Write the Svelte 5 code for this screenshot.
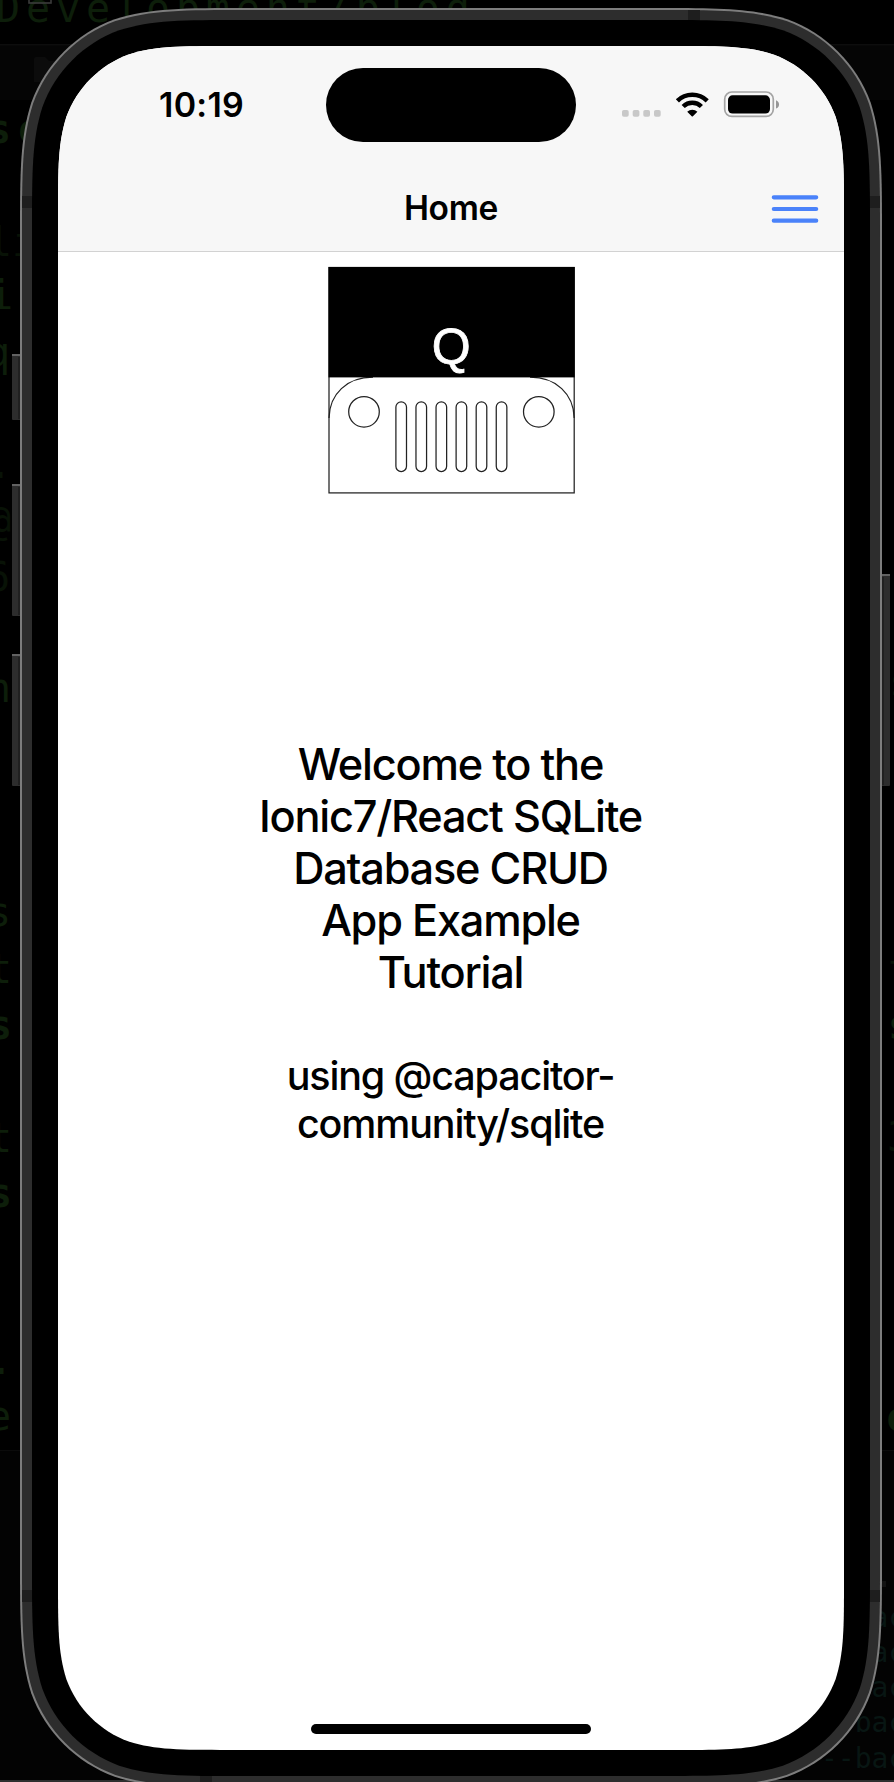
<script>
  // Continuous ("squircle") rounded rectangle outline.
  function squircle(x, y, w, h, r) {
    const a = 1.52866 * r, b = 1.08849 * r, c = 0.86841 * r, d = 0.63149 * r;
    const e = 0.07491 * r, f = 0.37282 * r, g = 0.16906 * r;
    const R = x + w, B = y + h;
    return [
      `M${x + a} ${y}`, `L${R - a} ${y}`,
      `C${R - b} ${y} ${R - c} ${y} ${R - d} ${y + e}`,
      `C${R - f} ${y + g} ${R - g} ${y + f} ${R - e} ${y + d}`,
      `C${R} ${y + c} ${R} ${y + b} ${R} ${y + a}`,
      `L${R} ${B - a}`,
      `C${R} ${B - b} ${R} ${B - c} ${R - e} ${B - d}`,
      `C${R - g} ${B - f} ${R - f} ${B - g} ${R - d} ${B - e}`,
      `C${R - c} ${B} ${R - b} ${B} ${R - a} ${B}`,
      `L${x + a} ${B}`,
      `C${x + b} ${B} ${x + c} ${B} ${x + d} ${B - e}`,
      `C${x + f} ${B - g} ${x + g} ${B - f} ${x + e} ${B - d}`,
      `C${x} ${B - c} ${x} ${B - b} ${x} ${B - a}`,
      `L${x} ${y + a}`,
      `C${x} ${y + b} ${x} ${y + c} ${x + e} ${y + d}`,
      `C${x + g} ${y + f} ${x + f} ${y + g} ${x + d} ${y + e}`,
      `C${x + c} ${y} ${x + b} ${y} ${x + a} ${y}Z`
    ].join('');
  }
  const shell = squircle(20, 8, 862, 1780, 150);
  const band = squircle(22, 10, 858, 1776, 148);
  const bezel = squircle(32, 20, 838, 1756, 138);
  const glass = squircle(0, 0, 786, 1704, 112);

  const code = [
    { t: 'Development/blog', x: -4, y: 22, ls: 5.9 },
    { t: 'sc', x: -13, y: 143, b: true, ls: 5.6 },
    { t: 'li', x: -12, y: 256, dim: true },
    { t: 'i', x: -11, y: 309 },
    { t: 'q', x: -14, y: 366 },
    { t: '.', x: -12, y: 478, dim: true },
    { t: '@', x: -13, y: 535, dim: true },
    { t: '6', x: -14, y: 591, dim: true },
    { t: 'n', x: -13, y: 702 },
    { t: 's', x: -13, y: 926 },
    { t: 't', x: -12, y: 983 },
    { t: 'sc', x: -12, y: 1039, b: true, ls: 5 },
    { t: 't', x: -12, y: 1152 },
    { t: 'sc', x: -12, y: 1207, b: true, ls: 5 },
    { t: '.', x: -11, y: 1374 },
    { t: 'e', x: -13, y: 1430 },
    { t: 's', x: 889, y: 696, dim: true },
    { t: 't', x: 888, y: 983, dim: true },
    { t: 's', x: 888, y: 1039, b: true },
    { t: '3', x: 887, y: 1151, dim: true },
    { t: 'c', x: 885, y: 1431, b: true }
  ];
  const flags = [1627, 1662, 1697, 1732, 1767.5];
  const slots = [0, 1, 2, 3, 4, 5];
  const welcome = ['Welcome to the', 'Ionic7/React SQLite', 'Database CRUD', 'App Example', 'Tutorial'];
  const using = ['using @capacitor-', 'community/sqlite'];
</script>

<div class="desktop">
  <svg class="backdrop" width="894" height="1782" viewBox="0 0 894 1782" aria-hidden="true">
    <rect width="894" height="1782" fill="#000" />
    <rect y="44" width="894" height="56" fill="#050505" />
    <rect y="44" width="894" height="1.5" fill="#0d0d0d" />
    <path d="M34 82V59q0-2 2-2h9l4 4h14v21z" fill="#0c0c0c" />
    <rect y="1450" width="894" height="332" fill="#030303" />
    <rect y="1450" width="894" height="1" fill="#0b0b0b" />
    {#each code as c}
      <text class="mono" class:bold={c.b} class:dim={c.dim} x={c.x} y={c.y} letter-spacing={c.ls ?? 0}>{c.t}</text>
    {/each}
    <rect x="29" y="-10" width="22" height="13" fill="none" stroke="#3b3b3b" stroke-width="1.6" />
    {#each flags as y}
      <text class="flag" x="821" {y}>--background</text>
    {/each}
    <rect x="878" y="1581" width="8" height="6" fill="#121212" />
    <rect y="1780" width="894" height="2" fill="#2e2e2e" />

    <g fill="#2d2d2d">
      <rect x="12" y="354" width="10" height="66" rx="1" />
      <rect x="12" y="484" width="10" height="132" rx="1" />
      <rect x="12" y="654" width="10" height="132" rx="1" />
      <rect x="880" y="574" width="10" height="212" rx="1" />
    </g>
    <path d="M12 355h10M12 485h10M12 655h10M880 575h10" stroke="#626262" stroke-width="2" />
    <path d="M19 357v62M19 487v128M19 657v128M883 577v208" stroke="#202020" stroke-width="2" />
    <path d={shell} fill="#7d7d7d" />
    <path d={band} fill="#2d2d2d" />
    <path d="M688 10h12v12h-12zM22 196h12v12H22zM868 196h12v12h-12zM22 1590h12v12H22zM868 1590h12v12h-12zM200 1774h12v12h-12z" fill="#1e1e1e" />
    <path d={bezel} fill="#000" />
  </svg>

  <main class="screen" style:clip-path={`path("${glass}")`}>
    <header>
      <div class="status">
        <div class="time">10:19</div>
        <div class="island"></div>
        <svg class="icons" width="160" height="28" viewBox="620 90 160 28" aria-hidden="true">
          <g fill="#c8c8c8">
            <rect x="622" y="110" width="6.7" height="6.7" rx="1.8" />
            <rect x="632.7" y="110" width="6.7" height="6.7" rx="1.8" />
            <rect x="643.3" y="110" width="6.7" height="6.7" rx="1.8" />
            <rect x="654" y="110" width="6.7" height="6.7" rx="1.8" />
          </g>
          <g fill="none" stroke="#000" stroke-width="4.5">
            <path d="M677.4 100.8a21.3 21.3 0 0 1 29.8 0" />
            <path d="M683.2 106.5a13 13 0 0 1 18.2 0" />
          </g>
          <path d="M687.2 111.7a7.5 7.5 0 0 1 10.2 0l-4.5 4.5q-.6.6-1.2 0z" />
          <rect x="724.7" y="92" width="48.6" height="24.4" rx="7.2" fill="none" stroke="#a4a4a4" stroke-width="1.7" />
          <rect x="728" y="95.3" width="42" height="18.2" rx="4.6" />
          <path d="M776 100.2q3 1.2 3 4.2t-3 4.2z" fill="#969696" />
        </svg>
      </div>
      <div class="toolbar">
        <h1>Home</h1>
        <svg class="menu" width="48" height="28" viewBox="0 0 48 28" aria-label="Menu">
          <path d="M2.8 2.3h42.4M2.8 14h42.4M2.8 25.7h42.4" stroke="#4a82fa" stroke-width="4.2" stroke-linecap="round" />
        </svg>
      </div>
    </header>

    <svg class="logo" width="248" height="228" viewBox="328 266 248 228" aria-hidden="true">
      <g fill="none" stroke="#222" stroke-width="1.25">
        <rect x="329" y="267.5" width="245.2" height="225.4" />
        <path d="M329 418C329.4 394 347 377.2 373 377.2M574.2 418C573.8 394 556 377.2 530 377.2" />
        <circle cx="364" cy="411.8" r="15.3" />
        <circle cx="538.8" cy="411.8" r="15.3" />
        {#each slots as i}
          <rect x={395.9 + i * 20.07} y="401.8" width="10.6" height="69.8" rx="5.3" />
        {/each}
      </g>
      <rect x="328.5" y="267" width="246.2" height="110.4" />
      <text class="q" x="451.2" y="364.3" text-anchor="middle">Q</text>
    </svg>

    <section class="copy">
      <h2>{#each welcome as line}<span>{line}</span>{/each}</h2>
      <h3>{#each using as line}<span>{line}</span>{/each}</h3>
    </section>

    <div class="home-indicator"></div>
  </main>
</div>

<style>
  :global(body) { margin: 0; background: #000; overflow: hidden; }
  .desktop {
    position: relative;
    box-sizing: border-box;
    width: 894px;
    height: 1782px;
    padding: 46px 50px 32px 58px;
    overflow: hidden;
    font-family: Inter, sans-serif;
    color: #000;
  }
  .backdrop { position: absolute; inset: 0; }
  .mono { font: 40px "DejaVu Sans Mono", monospace; fill: #0d1e0a; }
  .mono.bold { font-weight: 700; }
  .mono.dim { fill: #081206; }
  .flag { font: 28px "DejaVu Sans Mono", monospace; fill: #081613; }
  .screen {
    position: relative;
    display: flex;
    flex-direction: column;
    align-items: center;
    width: 786px;
    height: 1704px;
    background: #fff;
  }
  header {
    box-sizing: border-box;
    width: 100%;
    height: 206px;
    background: #f7f7f7;
    border-bottom: 1px solid #d2d2d2;
  }
  .status {
    display: grid;
    grid-template-columns: 268px 250px 268px;
    height: 118px;
    padding-top: 22px;
    box-sizing: border-box;
  }
  .time {
    padding: 16px 0 0 101px;
    font-size: 34px;
    font-weight: 600;
    line-height: 41px;
    letter-spacing: 0.25px;
  }
  .island { height: 74px; border-radius: 37px; background: #000; }
  .icons { margin: 22px 0 0 44px; }
  .toolbar {
    display: grid;
    grid-template-columns: 1fr auto 1fr;
    align-items: center;
    height: 88px;
    padding-right: 25px;
    padding-left: 25px;
  }
  h1 {
    grid-column: 2;
    margin: 0;
    font-size: 33.5px;
    font-weight: 600;
    line-height: 40px;
    letter-spacing: -0.3px;
  }
  .menu { justify-self: end; margin-top: 2px; }
  .logo { margin: 14px 0 0 1px; flex: none; }
  .q { font: 50px "Liberation Sans", Arial, sans-serif; fill: #fff; stroke: #fff; stroke-width: 0.8px; }
  .copy { margin-top: 244px; text-align: center; }
  h2, h3 { margin: 0; font-weight: 500; }
  h2 span, h3 span { display: block; margin-left: -1px; white-space: nowrap; }
  h2 { font-size: 43.3px; line-height: 52px; letter-spacing: -1.22px; }
  h3 { margin-top: 54px; font-size: 39.5px; line-height: 48px; letter-spacing: -1.15px; }
  .home-indicator {
    width: 280px;
    height: 10px;
    margin: auto 0 16px;
    border-radius: 5px;
    background: #000;
  }
</style>
